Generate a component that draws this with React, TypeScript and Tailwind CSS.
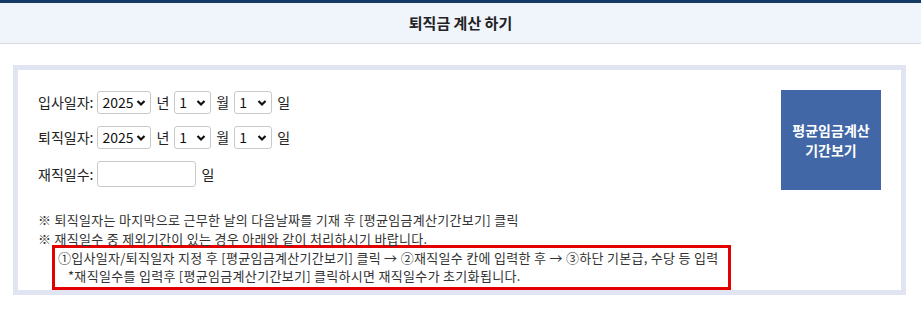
import React from "react";

const font = { fontFamily: '"Noto Sans CJK KR", "Noto Sans", sans-serif' };

function Chevron() {
  return (
    <svg width="10" height="7" viewBox="0 0 10 7" className="pointer-events-none absolute right-[5px] top-1/2 -translate-y-1/2">
      <polyline points="1.5,1.5 5,5 8.5,1.5" fill="none" stroke="#111" strokeWidth="2.2" />
    </svg>
  );
}

function Select({ value, options, width }: { value: string; options: string[]; width: string }) {
  return (
    <span className={`relative inline-block ${width}`}>
      <select
        defaultValue={value}
        className="h-[23px] w-full appearance-none rounded-[3px] border border-[#c9c9c9] bg-white pl-[4px] text-[14px] leading-[21px] text-[#111]"
      >
        {options.map((o) => (
          <option key={o} value={o}>
            {o}
          </option>
        ))}
      </select>
      <Chevron />
    </span>
  );
}

const years = ["2023", "2024", "2025"];
const months = Array.from({ length: 12 }, (_, i) => String(i + 1));
const days = Array.from({ length: 31 }, (_, i) => String(i + 1));

function DateRow({ label }: { label: string }) {
  return (
    <div className="flex h-[23px] items-center gap-[5px] text-[14px] text-[#222]">
      <span className="mr-[-1px]">{label}:</span>
      <Select value="2025" options={years} width="w-[54px]" />
      <span>년</span>
      <Select value="1" options={months} width="w-[37px]" />
      <span>월</span>
      <Select value="1" options={days} width="w-[38px]" />
      <span>일</span>
    </div>
  );
}

export default function App() {
  return (
    <div className="h-[315px] w-[921px] bg-white" style={font}>
      <div className="flex h-[44px] items-center justify-center border-t-[3px] border-b border-t-[#153a63] border-b-[#d9d9d9] bg-[#f0f4fb]">
        <h1 className="text-[15px] font-bold text-[#222]">퇴직금 계산 하기</h1>
      </div>

      <div className="mt-[21px] ml-[13px] mr-[15px] h-[230px] border-[5px] border-[#e1e5f1] bg-white px-[20px] pt-[21px]">
        <div className="flex justify-between">
          <div className="flex flex-col gap-[12px]">
            <DateRow label="입사일자" />
            <DateRow label="퇴직일자" />
            <div className="flex h-[26px] items-center gap-[5px] text-[14px] text-[#222]">
              <span className="mr-[-1px]">재직일수:</span>
              <input
                type="text"
                className="h-[26px] w-[99px] rounded-[3px] border border-[#c9c9c9] bg-white px-[4px]"
              />
              <span>일</span>
            </div>
          </div>
          <button className="mt-[-1px] flex h-[100px] w-[100px] items-center justify-center bg-[#4167a6] text-[14px] font-bold leading-[20px] text-white">
            평균임금계산
            <br />
            기간보기
          </button>
        </div>

        <div className="mt-[20px] text-[13px] leading-[19px] tracking-[0.3px] text-[#333]">
          <p>※ 퇴직일자는 마지막으로 근무한 날의 다음날짜를 기재 후 [평균임금계산기간보기] 클릭</p>
          <p>※ 재직일수 중 제외기간이 있는 경우 아래와 같이 처리하시기 바랍니다.</p>
          <div className="mt-[-3px] ml-[14px] w-[679px] border-[3px] border-[#e50000] pl-[3px] pt-[1px] pb-[2px] leading-[18px]">
            <p>①입사일자/퇴직일자 지정 후 [평균임금계산기간보기] 클릭 → ②재직일수 칸에 입력한 후 → ③하단 기본급, 수당 등 입력</p>
            <p className="pl-[10px]">*재직일수를 입력후 [평균임금계산기간보기] 클릭하시면 재직일수가 초기화됩니다.</p>
          </div>
        </div>
      </div>
    </div>
  );
}
